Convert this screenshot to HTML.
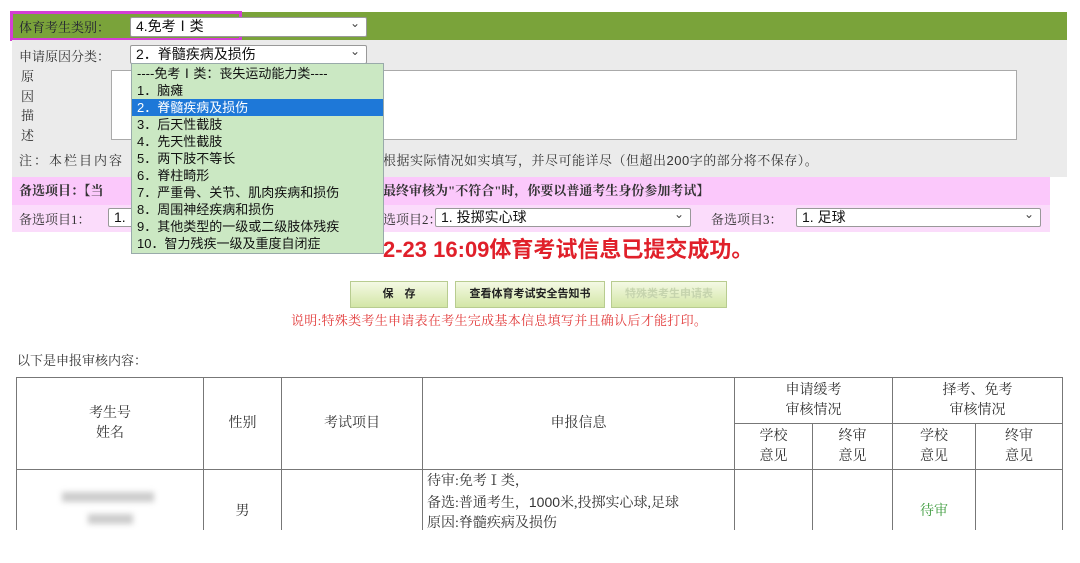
<!DOCTYPE html>
<html><head><meta charset="utf-8"><style>
*{margin:0;padding:0;box-sizing:border-box}
body{width:1080px;height:563px;background:#fff;position:relative;overflow:hidden;font-family:"Liberation Serif","Noto Serif CJK SC",serif;font-size:13px;color:#333}
.a{position:absolute}
.sans{font-family:"Liberation Sans","Noto Sans CJK SC",sans-serif}
.sel{position:absolute;background:#fff;border:1px solid #999;border-radius:2px;font-family:"Liberation Sans","Noto Sans CJK SC",sans-serif;font-size:14px;color:#111;padding-left:5px;line-height:17px}
.sel:after{content:"⌄";position:absolute;right:6px;top:-3px;font-size:12px;color:#444}
.dd div{height:17px;line-height:17px;padding-left:5px;font-size:13px;color:#111;font-family:"Liberation Sans","Noto Sans CJK SC",sans-serif;white-space:nowrap}
.btn{position:absolute;top:281px;height:27px;border:1px solid #b8cc90;background:linear-gradient(#f4f9e4,#d3e6a6);font-family:"Liberation Sans","Noto Sans CJK SC",sans-serif;font-size:11px;font-weight:bold;text-align:center;line-height:25px;color:#222}
table{position:absolute;left:16px;top:377px;width:1047px;border-collapse:collapse}
td{border:1px solid #777;text-align:center;font-size:14px;color:#333;line-height:20px}
</style></head><body>
<div class="a" style="left:12px;top:12px;width:1055px;height:28px;background:#7aa33a"></div>
<div class="a" style="left:10px;top:11px;width:232px;height:30px;border:3px solid #d33fd3"></div>
<div class="a" style="left:19px;top:17px;color:#223;font-size:13px">体育考生类别：</div>
<div class="sel" style="left:130px;top:17px;width:237px;height:20px">4.免考Ⅰ类</div>
<div class="a" style="left:12px;top:40px;width:1055px;height:137px;background:#ebebeb"></div>
<div class="a" style="left:19px;top:46px">申请原因分类：</div>
<div class="sel" style="left:130px;top:45px;width:237px;height:19px">2．脊髓疾病及损伤</div>
<div class="a" style="left:21px;top:67px;line-height:19.5px">原<br>因<br>描<br>述</div>
<div class="a" style="left:111px;top:70px;width:906px;height:70px;background:#fff;border:1px solid #aaa"></div>
<div class="a" style="left:19px;top:150px;font-size:13px;letter-spacing:2px">注：本栏目内容</div>
<div class="a" style="left:383px;top:150px;font-size:13px;letter-spacing:0.5px">根据实际情况如实填写，并尽可能详尽（但超出<span class="sans">200</span>字的部分将不保存）。</div>
<div class="a" style="left:12px;top:177px;width:1038px;height:28px;background:#fbc8fb"></div>
<div class="a" style="left:12px;top:205px;width:1038px;height:27px;background:#fbdcfb"></div>
<div class="a" style="left:19px;top:180px;font-weight:bold;color:#333">备选项目：【当</div>
<div class="a" style="left:383px;top:180px;font-weight:bold;color:#333">最终审核为"不符合"时，你要以普通考生身份参加考试】</div>
<div class="a" style="left:19px;top:209px">备选项目1：</div>
<div class="sel" style="left:108px;top:208px;width:40px;height:19px">1.</div>
<div class="a" style="left:383px;top:209px">选项目2：</div>
<div class="sel" style="left:435px;top:208px;width:256px;height:19px">1. 投掷实心球</div>
<div class="a" style="left:711px;top:209px">备选项目3：</div>
<div class="sel" style="left:796px;top:208px;width:245px;height:19px">1. 足球</div>
<div class="a sans" style="left:383px;top:232px;font-size:22px;font-weight:bold;color:#e0202a">2-23 16:09体育考试信息已提交成功。</div>
<div class="dd a" style="left:131px;top:63px;width:253px;height:191px;background:#cbe8c3;border:1px solid #9aa;padding-top:1px">
<div>----免考Ⅰ类：丧失运动能力类----</div>
<div>1．脑瘫</div>
<div style="background:#1e78d8;color:#fff">2．脊髓疾病及损伤</div>
<div>3．后天性截肢</div>
<div>4．先天性截肢</div>
<div>5．两下肢不等长</div>
<div>6．脊柱畸形</div>
<div>7．严重骨、关节、肌肉疾病和损伤</div>
<div>8．周围神经疾病和损伤</div>
<div>9．其他类型的一级或二级肢体残疾</div>
<div>10．智力残疾一级及重度自闭症</div>
</div>
<div class="btn" style="left:350px;width:98px">保　存</div>
<div class="btn" style="left:455px;width:150px">查看体育考试安全告知书</div>
<div class="btn" style="left:611px;width:116px;color:#c6d4ae">特殊类考生申请表</div>
<div class="a" style="left:291px;top:310px;color:#e23a3a;font-size:13px;letter-spacing:0.3px">说明:特殊类考生申请表在考生完成基本信息填写并且确认后才能打印。</div>
<div class="a" style="left:17px;top:350px">以下是申报审核内容：</div>
<table>
<tr style="height:46px"><td rowspan="2" style="width:187px">考生号<br>姓名</td><td rowspan="2" style="width:78px">性别</td><td rowspan="2" style="width:141px">考试项目</td><td rowspan="2" style="width:312px">申报信息</td><td colspan="2">申请缓考<br>审核情况</td><td colspan="2">择考、免考<br>审核情况</td></tr>
<tr style="height:46px"><td style="width:78px">学校<br>意见</td><td style="width:80px">终审<br>意见</td><td style="width:83px">学校<br>意见</td><td>终审<br>意见</td></tr>
<tr style="height:90px"><td style="color:#bbb">&nbsp;</td><td style="vertical-align:top;padding-top:32px">男</td><td></td><td style="text-align:left;vertical-align:top;padding:2px 4px">待审:免考Ⅰ类，<br>备选:普通考生，<span class="sans">1000</span>米,投掷实心球,足球<br>原因:脊髓疾病及损伤</td><td></td><td></td><td style="color:#3a9a3a;vertical-align:top;padding-top:32px">待审</td><td></td></tr>
</table>
<div class="a" style="left:62px;top:492px;width:92px;height:10px;background:#ccc;filter:blur(3px)"></div>
<div class="a" style="left:88px;top:514px;width:45px;height:10px;background:#ccc;filter:blur(3px)"></div>
<div class="a" style="left:0;top:530px;width:1080px;height:33px;background:#fff"></div>
</body></html>
